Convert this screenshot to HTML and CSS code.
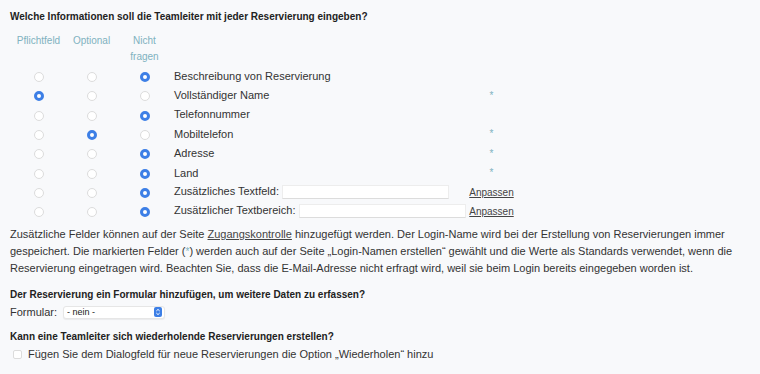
FILE: index.html
```html
<!DOCTYPE html>
<html lang="de">
<head>
    <meta charset="UTF-8">
    <meta name="viewport" content="width=device-width, initial-scale=1.0">
    <title>Reservierung Einstellungen</title>
    <link rel="stylesheet" href="styles.css">
</head>
<body>
    <h3 class="question first">Welche Informationen soll die Teamleiter mit jeder Reservierung eingeben?</h3>
    <table class="fields">
        <thead>
            <tr>
                <th>Pflichtfeld</th>
                <th>Optional</th>
                <th>Nicht<br>fragen</th>
                <th></th>
                <th></th>
            </tr>
        </thead>
        <tbody>
            <tr>
                <td><input type="radio" name="f1"></td>
                <td><input type="radio" name="f1"></td>
                <td><input type="radio" name="f1" checked></td>
                <td class="label">Beschreibung von Reservierung</td>
                <td class="extra"></td>
            </tr>
            <tr>
                <td><input type="radio" name="f2" checked></td>
                <td><input type="radio" name="f2"></td>
                <td><input type="radio" name="f2"></td>
                <td class="label">Vollständiger Name</td>
                <td class="extra"><span class="star">*</span></td>
            </tr>
            <tr>
                <td><input type="radio" name="f3"></td>
                <td><input type="radio" name="f3"></td>
                <td><input type="radio" name="f3" checked></td>
                <td class="label">Telefonnummer</td>
                <td class="extra"></td>
            </tr>
            <tr>
                <td><input type="radio" name="f4"></td>
                <td><input type="radio" name="f4" checked></td>
                <td><input type="radio" name="f4"></td>
                <td class="label">Mobiltelefon</td>
                <td class="extra"><span class="star">*</span></td>
            </tr>
            <tr>
                <td><input type="radio" name="f5"></td>
                <td><input type="radio" name="f5"></td>
                <td><input type="radio" name="f5" checked></td>
                <td class="label">Adresse</td>
                <td class="extra"><span class="star">*</span></td>
            </tr>
            <tr>
                <td><input type="radio" name="f6"></td>
                <td><input type="radio" name="f6"></td>
                <td><input type="radio" name="f6" checked></td>
                <td class="label">Land</td>
                <td class="extra"><span class="star">*</span></td>
            </tr>
            <tr>
                <td><input type="radio" name="f7"></td>
                <td><input type="radio" name="f7"></td>
                <td><input type="radio" name="f7" checked></td>
                <td class="label">Zusätzliches Textfeld: <input type="text" class="text-input"></td>
                <td class="extra"><a href="#">Anpassen</a></td>
            </tr>
            <tr>
                <td><input type="radio" name="f8"></td>
                <td><input type="radio" name="f8"></td>
                <td><input type="radio" name="f8" checked></td>
                <td class="label">Zusätzlicher Textbereich: <input type="text" class="text-input"></td>
                <td class="extra"><a href="#">Anpassen</a></td>
            </tr>
        </tbody>
    </table>

    <p class="note">Zusätzliche Felder können auf der Seite <a href="#">Zugangskontrolle</a> hinzugefügt werden. Der Login-Name wird bei der Erstellung von Reservierungen immer gespeichert. Die markierten Felder (<span class="star">*</span>) werden auch auf der Seite „Login-Namen erstellen“ gewählt und die Werte als Standards verwendet, wenn die Reservierung eingetragen wird. Beachten Sie, dass die E-Mail-Adresse nicht erfragt wird, weil sie beim Login bereits eingegeben worden ist.</p>

    <h3 class="question">Der Reservierung ein Formular hinzufügen, um weitere Daten zu erfassen?</h3>
    <div class="row">
        <label>Formular:</label>
        <span class="select-box">
            <select>
                <option>- nein -</option>
            </select>
            <svg class="select-arrow" width="8" height="10" viewBox="0 0 8 10">
                <rect width="8" height="10" rx="2" fill="#3d7fe6"/>
                <path d="M2.3 4 L4 2.4 L5.7 4 M2.3 6 L4 7.6 L5.7 6" stroke="#fff" stroke-width="1" fill="none"/>
            </svg>
        </span>
    </div>

    <h3 class="question">Kann eine Teamleiter sich wiederholende Reservierungen erstellen?</h3>
    <div class="row">
        <label class="check"><input type="checkbox"> Fügen Sie dem Dialogfeld für neue Reservierungen die Option „Wiederholen“ hinzu</label>
    </div>
</body>
</html>
```

FILE: styles.css
```css
body {
    margin: 0;
    padding: 11px 10px 0;
    background-color: #f8f9fb;
    color: #333;
    font-family: "Liberation Sans", Arial, sans-serif;
    font-size: 11px;
}
.question {
    font-size: 10px;
    line-height: 12px;
    font-weight: bold;
    color: #222;
    margin: 12px 0 4px;
}
.question.first {
    margin: 0 0 10px;
}
.fields {
    border-collapse: collapse;
    margin-left: 2px;
}
.fields th {
    width: 53px;
    font-weight: normal;
    font-size: 10px;
    line-height: 16px;
    color: #7fb2c0;
    text-align: center;
    vertical-align: top;
    padding: 0 0 1px;
}
.fields th:nth-child(4) {
    width: 296px;
}
.fields th:nth-child(5) {
    width: 49px;
}
.fields td {
    height: 19.4px;
    padding: 0;
    text-align: center;
}
.fields td.label {
    text-align: left;
    padding-left: 3px;
    white-space: nowrap;
}
.fields td.extra {
    font-size: 10px;
}
.fields a {
    color: #444;
}
.star {
    color: #7fb2c0;
    font-size: 10px;
}
input[type="radio"] {
    appearance: none;
    width: 10px;
    height: 10px;
    margin: 0;
    vertical-align: middle;
    border: 1px solid #dcdcdc;
    border-radius: 50%;
    background-color: #fff;
}
input[type="radio"]:checked {
    border: 3px solid #3d7fe6;
    background-color: #fff;
}
.text-input {
    width: 167px;
    height: 14px;
    margin: 0;
    padding: 0 2px;
    border: 1px solid #ededed;
    border-bottom-color: #dcdcdc;
    background: #fff;
    vertical-align: middle;
    box-sizing: border-box;
}
.note {
    line-height: 17px;
    margin: 5px 0 0;
}
.note a {
    color: #444;
}
.row {
    display: flex;
    align-items: center;
    gap: 6px;
    height: 14px;
}
.select-box {
    display: inline-flex;
    align-items: center;
    width: 102px;
    height: 13px;
    background: #fff;
    border: 1px solid #e6e6e6;
    border-radius: 3px;
    box-shadow: 0 1px 1px rgba(0, 0, 0, 0.06);
    padding-right: 2px;
    box-sizing: border-box;
}
.select-box select {
    appearance: none;
    flex: 1;
    border: none;
    background: transparent;
    font-family: "Liberation Sans", Arial, sans-serif;
    font-size: 9px;
    padding: 0 3px;
    color: #222;
}
.check {
    display: flex;
    align-items: center;
    gap: 6px;
    margin-left: 3px;
}
input[type="checkbox"] {
    appearance: none;
    width: 9px;
    height: 9px;
    margin: 0;
    border: 1px solid #dcdcdc;
    border-radius: 2px;
    background: #fff;
}
```
